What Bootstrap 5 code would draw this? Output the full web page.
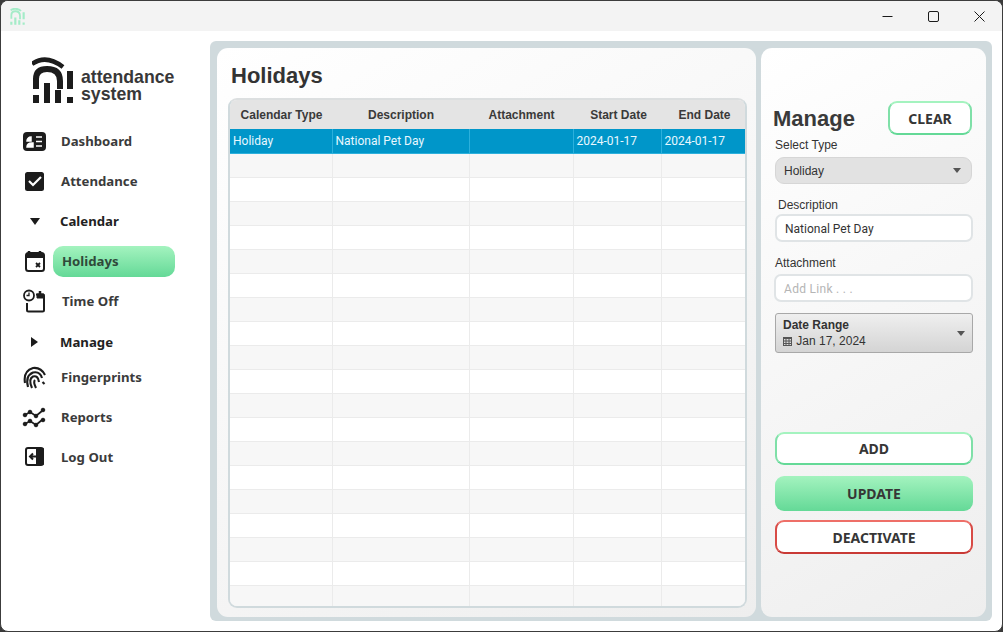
<!DOCTYPE html>
<html lang="en">
<head>
    <meta charset="UTF-8">
    <title>Attendance System</title>
    <link href="https://cdn.jsdelivr.net/npm/bootstrap@5.3.3/dist/css/bootstrap.min.css" rel="stylesheet">
    <script src="https://cdn.jsdelivr.net/npm/bootstrap@5.3.3/dist/js/bootstrap.bundle.min.js"></script>
    <style>
        html, body { height: 100%; }
        body { background: #3a3a3a; overflow: hidden; font-family: "Liberation Sans", Arial, sans-serif; color: #333; }
        .app-window { width: 1003px; height: 632px; background: #fff; border: 1px solid #3c3c3c; border-radius: 8px; overflow: hidden; }
        .title-bar { height: 30px; background: #f3f3f3; padding-left: 8px; }
        .win-btn { width: 46px; height: 29px; }

        .side-col { width: 209px; flex: none; }
        .logo-row { height: 81px; padding: 26px 0 0 31px; gap: 7px; }
        .logo-text { font-size: 17.7px; line-height: 17px; font-weight: 700; color: #383838; padding-top: 12px; }
        .side-nav { margin-top: 9px; }
        .nav-row { height: 40px; padding-left: 21px; color: #3b3b3b; font: 700 13.2px "Noto Sans", sans-serif; }
        .nav-row.tight { height: 35px; padding-bottom: 5px; }
        .nav-row.manage-row { height: 41px; padding-top: 1px; }
        .nav-icon { width: 25px; height: 25px; flex: none; margin-right: 14px; }
        .nav-arrow { width: 25px; flex: none; margin-right: 13px; display: flex; justify-content: center; }
        .arrow-down { border-left: 5px solid transparent; border-right: 5px solid transparent; border-top: 7px solid #1b1b1b; }
        .arrow-right { border-top: 5px solid transparent; border-bottom: 5px solid transparent; border-left: 7px solid #1b1b1b; }
        .group-label { color: #222; }
        .nudge-right { margin-left: 1px; }
        .nav-pill-active { width: 122px; height: 31px; margin-left: -8px; padding-left: 9px; border-radius: 10px; background: linear-gradient(#a4f3bf, #64d997); color: #2f4a3a; }

        .main-wrap { width: 782px; height: 580px; margin-top: 10px; background: #d0dadd; border-radius: 6px; padding: 7px 6px 4px 7px; gap: 5px; }
        .soft-card { background: linear-gradient(150deg, #fff, #eee); border-radius: 11px; height: 569px; }
        .holiday-card { width: 539px; padding: 0 9px 0 11px; }
        .manage-card { width: 225px; padding: 0 14px 0 12px; }
        .page-heading { font-size: 22px; font-weight: 700; color: #333; height: 50px; margin: 0; padding: 15px 0 0 3px; line-height: 26px; }
        .table-shell { height: 510px; width: 519px; border: 2px solid #d0dadd; border-top-color: #dcdfe0; border-radius: 9px; overflow: hidden; background: #f7f7f7; }
        .grid-table { table-layout: fixed; width: 515px; margin: 0; font: 12px Roboto, sans-serif; border-collapse: collapse; }
        .grid-table th { height: 29px; background: #e4e4e4; font: 700 12px "Liberation Sans", Arial, sans-serif; color: #3a3a3a; text-align: center; padding: 1px 0 0 1px; border: 0; vertical-align: middle; }
        .grid-table th.date-col { padding-left: 3px; }
        .grid-table td { height: 24px; padding: 1px 3px 0; border: 0; border-right: 1px solid #ebebeb; border-bottom: 1px solid #ebebeb; background: #fff; vertical-align: middle; box-shadow: none; }
        .grid-table tbody tr:nth-child(even) td { background: #f7f7f7; }
        .grid-table tbody tr.row-selected td { background: #0096c9; color: #e8f8ff; border-right-color: #2cb0dc; border-bottom-color: #2cb0dc; }

        .manage-head { padding-top: 53px; height: 90px; }
        .manage-title { font-size: 22px; font-weight: 700; color: #3a3a3a; margin: 0; padding-top: 4px; line-height: 28px; }
        .btn-clear { width: 84px; height: 34px; font-size: 13.5px; }
        .field-label { font-size: 12px; color: #333; line-height: 14px; }
        .select-label { margin-left: 2px; }
        .desc-label { margin: 14px 0 0 5px; }
        .attach-label { margin: 14px 0 0 2px; }
        .outline-green, .outline-red, .fill-green { font: 700 14px "Noto Sans", sans-serif; color: #363636; padding: 0; border-radius: 9px; }
        .outline-green { background: #fff; border: 2px solid; border-color: #a4f3bf #7fe0a8 #64d997; }
        .outline-red { background: #fff; border: 2px solid; border-color: #ee6f68 #d84b46 #c93a36; }
        .fill-green { background: linear-gradient(#a4f3bf, #64d997); border: 0; }
        .outline-green:hover, .fill-green:hover, .outline-red:hover { color: #363636; }
        .type-select { height: 27px; width: 197px; margin: 5px 0 0 2px; background: #e2e2e2; border: 1px solid #d6d6d6; border-radius: 9px; font-size: 12px; color: #333; padding: 0 10px 0 8px; }
        .text-field { height: 28px; border: 2px solid #e0e4e6; border-radius: 7px; font: 12px Roboto, sans-serif; color: #333; padding: 2px 8px 0; background: #fff; }
        .text-field::placeholder { color: #b5b5b5; letter-spacing: .3px; }
        .desc-field { width: 198px; margin: 2px 0 0 2px; }
        .attach-field { width: 199px; margin: 4px 0 0 1px; }
        .date-box { height: 40px; width: 198px; margin: 11px 0 0 2px; background: linear-gradient(#efefef, #d4d4d4); border: 1px solid #a8a8a8; border-radius: 3px; font-size: 12px; color: #333; padding: 0 7px 0 7px; line-height: 16px; }
        .type-select.dropdown-toggle::after, .date-box.dropdown-toggle::after { border-top-width: 5px; border-left-width: 4.5px; border-right-width: 4.5px; color: #555; margin: 0; }
        .date-title { font-weight: 700; }
        .cal-glyph { margin-right: 1px; }
        .action-stack { margin-top: 79px; }
        .action-btn { display: block; width: 198px; margin-left: 2px; }
        .add-btn { height: 33px; }
        .update-btn { height: 35px; margin-top: 11px; }
        .deact-btn { height: 34px; margin-top: 9px; }
    </style>
</head>
<body class="m-0">
<div class="app-window d-flex flex-column">
    <div class="title-bar d-flex align-items-center justify-content-between flex-none">
        <svg width="17" height="17" viewBox="0 0 42 47" fill="none" stroke="#a4ecc8" aria-label="app icon">
            <path d="M2 6Q16 -3 31 8" stroke-width="5"/>
            <path d="M4 30V20Q4 9 15 9Q28 9 28 22V31" stroke-width="5"/>
            <path d="M38 12V31M4 38V46M15 26V46M26 34V46M38 40V46" stroke-width="6"/>
        </svg>
        <div class="d-flex">
            <div class="win-btn d-flex align-items-center justify-content-center"><svg width="11" height="11" viewBox="0 0 11 11"><path d="M.5 5.5h10" stroke="#1a1a1a"/></svg></div>
            <div class="win-btn d-flex align-items-center justify-content-center"><svg width="11" height="11" viewBox="0 0 11 11" fill="none"><rect x=".5" y=".5" width="10" height="10" rx="1.5" stroke="#1a1a1a"/></svg></div>
            <div class="win-btn d-flex align-items-center justify-content-center"><svg width="11" height="11" viewBox="0 0 11 11"><path d="M.5.5l10 10M10.5.5l-10 10" stroke="#1a1a1a"/></svg></div>
        </div>
    </div>

    <div class="d-flex flex-grow-1">
        <aside class="side-col">
            <div class="logo-row d-flex align-items-start">
                <svg width="42" height="47" viewBox="0 0 42 47" fill="none" stroke="#1c1c1c" aria-label="logo">
                    <path d="M0 7Q14 -3 31 10" stroke-width="4.5"/>
                    <path d="M4 32V22Q4 12 15 12Q28 12 28 24V32" stroke-width="6"/>
                    <path d="M38 14V32M4 38V46M15 26V46M26 33V46M38 40V46" stroke-width="6"/>
                </svg>
                <div class="logo-text">attendance<br>system</div>
            </div>
            <nav class="side-nav">
                <div class="nav-row d-flex align-items-center">
                    <svg class="nav-icon" viewBox="0 0 25 25"><rect x="1" y="3" width="23" height="19" rx="4" fill="#1c1c1c"/><path d="M5 12a4 4 0 0 1 4-4v4zM5 18q0-4 5-4h1v4zM14 8h6M14 12.500h6M14 17h6" fill="#fff" stroke="#fff" stroke-width="1.500"/></svg>
                    <span>Dashboard</span>
                </div>
                <div class="nav-row d-flex align-items-center">
                    <svg class="nav-icon" viewBox="0 0 25 25"><rect x="3" y="3" width="19" height="19" rx="2.500" fill="#1c1c1c"/><path d="M7 12l4 4 8-8" fill="none" stroke="#fff" stroke-width="2.200"/></svg>
                    <span>Attendance</span>
                </div>
                <div class="nav-row d-flex align-items-center group-label">
                    <div class="nav-arrow"><i class="arrow-down"></i></div>
                    <span>Calendar</span>
                </div>
                <div class="nav-row d-flex align-items-center">
                    <svg class="nav-icon" viewBox="0 0 25 25"><path d="M7 2v4M18 2v4" stroke="#1c1c1c" stroke-width="2.500"/><rect x="4" y="4" width="18" height="18" rx="2.500" fill="none" stroke="#1c1c1c" stroke-width="2"/><path d="M4 5h18v4H4z" fill="#1c1c1c"/><path d="M14 14l4 4M18 14l-4 4" stroke="#1c1c1c" stroke-width="1.800"/></svg>
                    <div class="nav-pill-active d-flex align-items-center">Holidays</div>
                </div>
                <div class="nav-row d-flex align-items-center">
                    <svg class="nav-icon" viewBox="0 0 25 25" fill="none" stroke="#1c1c1c"><circle cx="7" cy="6.500" r="5" stroke-width="1.800"/><path d="M7 3.500v3H4.500" stroke-width="1.300"/><path d="M5 14v7a1.500 1.500 0 0 0 1.500 1.500h14a1.500 1.500 0 0 0 1.500-1.500V7a1.500 1.500 0 0 0-1.500-1.500H14" stroke-width="2"/><path d="M15 9V5h7v4z" fill="#1c1c1c"/><path d="M18 2v4" stroke-width="2.500"/></svg>
                    <span class="nudge-right">Time Off</span>
                </div>
                <div class="nav-row manage-row d-flex align-items-center group-label">
                    <div class="nav-arrow"><i class="arrow-right"></i></div>
                    <span>Manage</span>
                </div>
                <div class="nav-row tight d-flex align-items-center">
                    <svg class="nav-icon" viewBox="0 0 25 25" fill="none" stroke="#1c1c1c" stroke-width="2.100"><path d="M3 18Q1 6 11 3Q19 2 23 10"/><path d="M6 22Q3 11 11 7.500Q18 6 20 13"/><path d="M10 23Q6 14 11 11.500Q16 10 17 17"/><path d="M14 23Q11 17 13 15"/><path d="M20.500 17l2 2"/></svg>
                    <span>Fingerprints</span>
                </div>
                <div class="nav-row d-flex align-items-center">
                    <svg class="nav-icon" viewBox="0 0 25 25" fill="#1c1c1c" stroke="#1c1c1c"><path d="M3 10l5-3 6 4 6-5M3 19l5-3 6 4 6-5" fill="none" stroke-width="1.800"/><circle cx="3" cy="10" r="1.800"/><circle cx="8" cy="7" r="1.800"/><circle cx="14" cy="11" r="1.800"/><circle cx="21" cy="5" r="1.800"/><circle cx="3" cy="19" r="1.800"/><circle cx="8" cy="16" r="1.800"/><circle cx="14" cy="20" r="1.800"/><circle cx="21" cy="15" r="1.800"/></svg>
                    <span>Reports</span>
                </div>
                <div class="nav-row d-flex align-items-center">
                    <svg class="nav-icon" viewBox="0 0 25 25"><rect x="4" y="3" width="17" height="17" rx="2" fill="#fff" stroke="#1c1c1c" stroke-width="2"/><path d="M14 3h7a1 1 0 0 1 1 1v15a1 1 0 0 1-1 1h-7z" fill="#1c1c1c"/><path d="M15 11.500H8M11 8.500l-3 3 3 3" fill="none" stroke="#1c1c1c" stroke-width="2"/></svg>
                    <span>Log Out</span>
                </div>
            </nav>
        </aside>

        <main class="main-wrap d-flex">
            <section class="soft-card holiday-card">
                <h1 class="page-heading">Holidays</h1>
                <div class="table-shell">
                    <table class="table grid-table">
                        <colgroup><col style="width:102px"><col style="width:137px"><col style="width:104px"><col style="width:88px"><col style="width:84px"></colgroup>
                        <thead>
                            <tr><th>Calendar Type</th><th>Description</th><th>Attachment</th><th class="date-col">Start Date</th><th class="date-col">End Date</th></tr>
                        </thead>
                        <tbody id="holiday-rows">
                            <tr class="row-selected"><td>Holiday</td><td>National Pet Day</td><td></td><td>2024-01-17</td><td>2024-01-17</td></tr>
                        </tbody>
                    </table>
                </div>
            </section>

            <section class="soft-card manage-card">
                <div class="manage-head d-flex justify-content-between align-items-start">
                    <h2 class="manage-title">Manage</h2>
                    <button type="button" class="btn outline-green btn-clear">CLEAR</button>
                </div>
                <div class="field-label select-label">Select Type</div>
                <button type="button" class="btn type-select dropdown-toggle d-flex align-items-center justify-content-between">Holiday</button>
                <div class="field-label desc-label">Description</div>
                <input class="form-control text-field desc-field" type="text" value="National Pet Day">
                <div class="field-label attach-label">Attachment</div>
                <input class="form-control text-field attach-field" type="text" placeholder="Add Link . . .">
                <button type="button" class="btn date-box dropdown-toggle d-flex align-items-center justify-content-between text-start">
                    <span><span class="date-title">Date Range</span><br><svg class="cal-glyph" width="9" height="9" viewBox="0 0 9 9" fill="#555"><path d="M0 0h9v9H0zM1 2v1.500h1.500V2zM3.500 2v1.500h2V2zM6.500 2v1.500H8V2zM1 4.500V6h1.500V4.500zM3.500 4.500V6h2V4.500zM6.500 4.500V6H8V4.500zM1 7v1h1.500V7zM3.500 7v1h2V7zM6.500 7v1H8V7z" fill-rule="evenodd"/></svg> Jan 17, 2024</span>
                </button>
                <div class="action-stack d-flex flex-column">
                    <button type="button" class="btn outline-green action-btn add-btn">ADD</button>
                    <button type="button" class="btn fill-green action-btn update-btn">UPDATE</button>
                    <button type="button" class="btn outline-red action-btn deact-btn">DEACTIVATE</button>
                </div>
            </section>
        </main>
    </div>
</div>
<script>
    // empty striped rows under the selected one
    const rows = document.getElementById("holiday-rows");
    for (let i = 0; i < 19; i++) {
        const tr = document.createElement("tr");
        tr.innerHTML = "<td></td><td></td><td></td><td></td><td></td>";
        rows.appendChild(tr);
    }
</script>
</body>
</html>
